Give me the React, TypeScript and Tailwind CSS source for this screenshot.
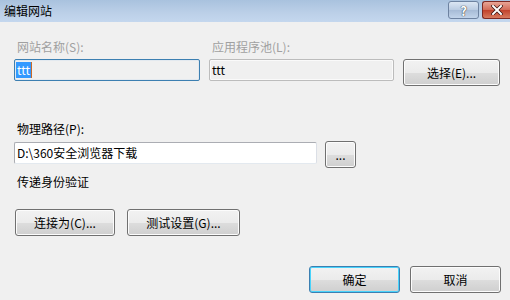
import React from 'react';

const font = { fontFamily: '"Noto Sans CJK SC", "Liberation Sans", sans-serif' };

function Btn({ children, className = '', primary = false }: { children: React.ReactNode; className?: string; primary?: boolean }) {
  return (
    <button
      className={[
        'relative flex h-[27px] items-center justify-center rounded-[3px] border text-[12px] text-black',
        'bg-[linear-gradient(#f2f2f2_0%,#ebebeb_50%,#dddddd_51%,#cfcfcf_100%)]',
        primary ? 'border-[#3c7fb1] shadow-[inset_0_0_0_1px_#48d3fb]' : 'border-[#707070] shadow-[inset_0_0_0_1px_#fcfcfc]',
        className,
      ].join(' ')}
    >
      {children}
    </button>
  );
}

export default function App() {
  return (
    <div className="h-[300px] w-[510px] overflow-hidden bg-[#f0f0f0] text-[12px] leading-[16px]" style={font}>
      {/* title bar */}
      <div className="flex h-[22px] items-start bg-[linear-gradient(#a9c2de,#bcd0e8_60%,#c4d7ee)]">
        <div className="pl-[4px] pt-[3px] text-[12px] text-black">编辑网站</div>
        <div className="ml-auto flex gap-[3px] pt-[1px]">
          <div className="flex h-[18px] w-[31px] items-center justify-center rounded-[3px] border border-[#6d82a0] bg-[linear-gradient(#dbe6f3,#b9cbe2_50%,#a6bbd6_51%,#c2d4ea)] text-[13px] font-bold leading-none text-white [text-shadow:0_0_1px_#333,0_0_1px_#333]">
            ?
          </div>
          <div className="flex h-[18px] w-[28px] items-center justify-center rounded-l-[3px] border border-r-0 border-[#7e2a24] bg-[linear-gradient(#e8a596,#d26a56_50%,#c1412b_51%,#d77a5e)]">
            <svg width="12" height="10" viewBox="0 0 12 10">
              <path d="M2 1 L10 9 M10 1 L2 9" stroke="#3a1410" strokeWidth="3.4" strokeLinecap="square" />
              <path d="M2 1 L10 9 M10 1 L2 9" stroke="#ffffff" strokeWidth="2" strokeLinecap="square" />
            </svg>
          </div>
        </div>
      </div>

      <div className="pl-[14px]">
        {/* row 1 labels */}
        <div className="mt-[17px] flex text-[#a0a0a0]">
          <div className="w-[195px] pl-[3px]">网站名称(S):</div>
          <div className="pl-[3px]">应用程序池(L):</div>
        </div>
        <div className="mt-[4px] flex items-start">
          <div className="flex h-[22px] w-[186px] items-center rounded-[2px] border border-[#3c7fb1] bg-[#f0f0f0] px-[1px] shadow-[inset_0_0_0_1px_#e3e9ef]">
            <span className="bg-[#3399ff] px-[1px] text-white">ttt</span>
            <span className="h-[16px] w-[1px] bg-[#c86a2a]" />
          </div>
          <div className="ml-[9px] flex h-[22px] w-[185px] items-center rounded-[2px] border border-[#bcbcbc] bg-[#f0f0f0] px-[2px] shadow-[inset_0_0_0_1px_#fafafa]">
            ttt
          </div>
          <Btn className="ml-[9px] w-[97px]">选择(E)...</Btn>
        </div>

        {/* physical path */}
        <div className="mt-[35px] pl-[3px] text-black">物理路径(P):</div>
        <div className="mt-[4px] flex items-start">
          <div className="mt-[1px] flex h-[22px] w-[303px] items-center rounded-[2px] border border-[#abadb3] border-b-[#e3e9ef] border-r-[#dbdfe6] bg-white px-[2px] text-black">
            D:\360安全浏览器下载
          </div>
          <Btn className="ml-[8px] w-[31px]">...</Btn>
        </div>

        <div className="mt-[6px] pl-[3px] text-black">传递身份验证</div>

        <div className="mt-[19px] flex">
          <Btn className="ml-[1px] w-[100px]">连接为(C)...</Btn>
          <Btn className="ml-[12px] w-[113px]">测试设置(G)...</Btn>
        </div>

        <div className="mt-[30px] flex pr-[9px]">
          <Btn primary className="ml-[295px] w-[91px]">确定</Btn>
          <Btn className="ml-[10px] w-[91px]">取消</Btn>
        </div>
      </div>
    </div>
  );
}
